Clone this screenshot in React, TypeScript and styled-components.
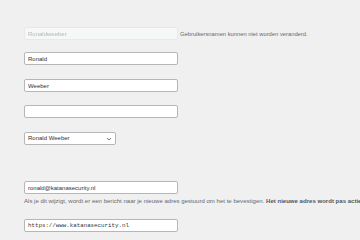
import React from "react";
import styled, { createGlobalStyle } from "styled-components";

const GlobalStyle = createGlobalStyle`
  html, body {
    margin: 0;
    padding: 0;
    background: #f0f0f1;
  }
  body {
    width: 360px;
    height: 240px;
    overflow: hidden;
    font-family: "Liberation Sans", Arial, sans-serif;
    color: #2c3338;
  }
`;

export default function App() {
  return (
    <>
      <GlobalStyle />
      <Form>
        <Field $mt={27}>
          <TextInput value="Ronaldweeber" disabled readOnly $disabled />
          <Description>Gebruikersnamen kunnen niet worden veranderd.</Description>
        </Field>
        <Field $mt={12}>
          <TextInput value="Ronald" readOnly />
        </Field>
        <Field $mt={14}>
          <TextInput value="Weeber" readOnly />
        </Field>
        <Field $mt={13}>
          <TextInput value="" readOnly />
        </Field>
        <Field $mt={14}>
          <SelectWrap>
            <Select defaultValue="Ronald Weeber">
              <option>Ronald Weeber</option>
              <option>Ronald</option>
              <option>Weeber</option>
            </Select>
            <Chevron viewBox="0 0 10 10">
              <path d="M2.5 3.8 L5 6.3 L7.5 3.8" fill="none" stroke="#50575e" strokeWidth="1" />
            </Chevron>
          </SelectWrap>
        </Field>
        <Field $mt={36}>
          <TextInput value="ronald@katanasecurity.nl" readOnly />
        </Field>
        <Note>
          Als je dit wijzigt, wordt er een bericht naar je nieuwe adres gestuurd om het te bevestigen.{" "}
          <strong>Het nieuwe adres wordt pas actief nadat het bevestigd is.</strong>
        </Note>
        <Field $mt={14}>
          <TextInput value="https://www.katanasecurity.nl" readOnly $mono />
        </Field>
      </Form>
    </>
  );
}

const Form = styled.div({
  display: "flex",
  flexDirection: "column",
  paddingLeft: "24px",
  overflow: "hidden",
});

const Field = styled.div<{ $mt: number }>`
  display: flex;
  align-items: center;
  gap: 2px;
  height: 13px;
  margin-top: ${(p) => p.$mt}px;
`;

const TextInput = styled.input<{ $disabled?: boolean; $mono?: boolean }>`
  box-sizing: border-box;
  flex: none;
  width: 154px;
  height: 13px;
  margin: 0;
  padding: 0 3px;
  border: 1px solid ${(p) => (p.$disabled ? "#e8e8ea" : "#b4b6b9")};
  border-radius: 2px;
  background: ${(p) => (p.$disabled ? "#f6f7f7" : "#ffffff")};
  color: ${(p) => (p.$disabled ? "#b4b6b9" : "#2c3338")};
  font-family: ${(p) =>
    p.$mono ? '"Liberation Mono", "Courier New", monospace' : '"Liberation Sans", Arial, sans-serif'};
  font-size: ${(p) => (p.$mono ? "5.8px" : "6px")};
  outline: none;
  ${(p) => (p.$disabled ? "filter: blur(0.7px);" : "")}
`;

const Description = styled.span({
  fontSize: "5.8px",
  color: "#646970",
  whiteSpace: "nowrap",
});

const SelectWrap = styled.div({
  position: "relative",
  flex: "none",
  width: "92px",
  height: "13px",
});

const Select = styled.select({
  display: "block",
  boxSizing: "border-box",
  appearance: "none",
  width: "100%",
  height: "13px",
  margin: 0,
  padding: "0 12px 0 3px",
  border: "1px solid #b4b6b9",
  borderRadius: "2px",
  background: "#ffffff",
  color: "#2c3338",
  fontFamily: '"Liberation Sans", Arial, sans-serif',
  fontSize: "6px",
  lineHeight: "11px",
  outline: "none",
});

const Chevron = styled.svg({
  position: "absolute",
  right: "3px",
  top: "2.5px",
  width: "8px",
  height: "8px",
  pointerEvents: "none",
});

const Note = styled.div({
  marginTop: "3px",
  fontSize: "6.05px",
  lineHeight: "8px",
  color: "#646970",
  whiteSpace: "nowrap",
  overflow: "hidden",
  "& strong": {
    color: "#50575e",
    fontWeight: 700,
  },
});
